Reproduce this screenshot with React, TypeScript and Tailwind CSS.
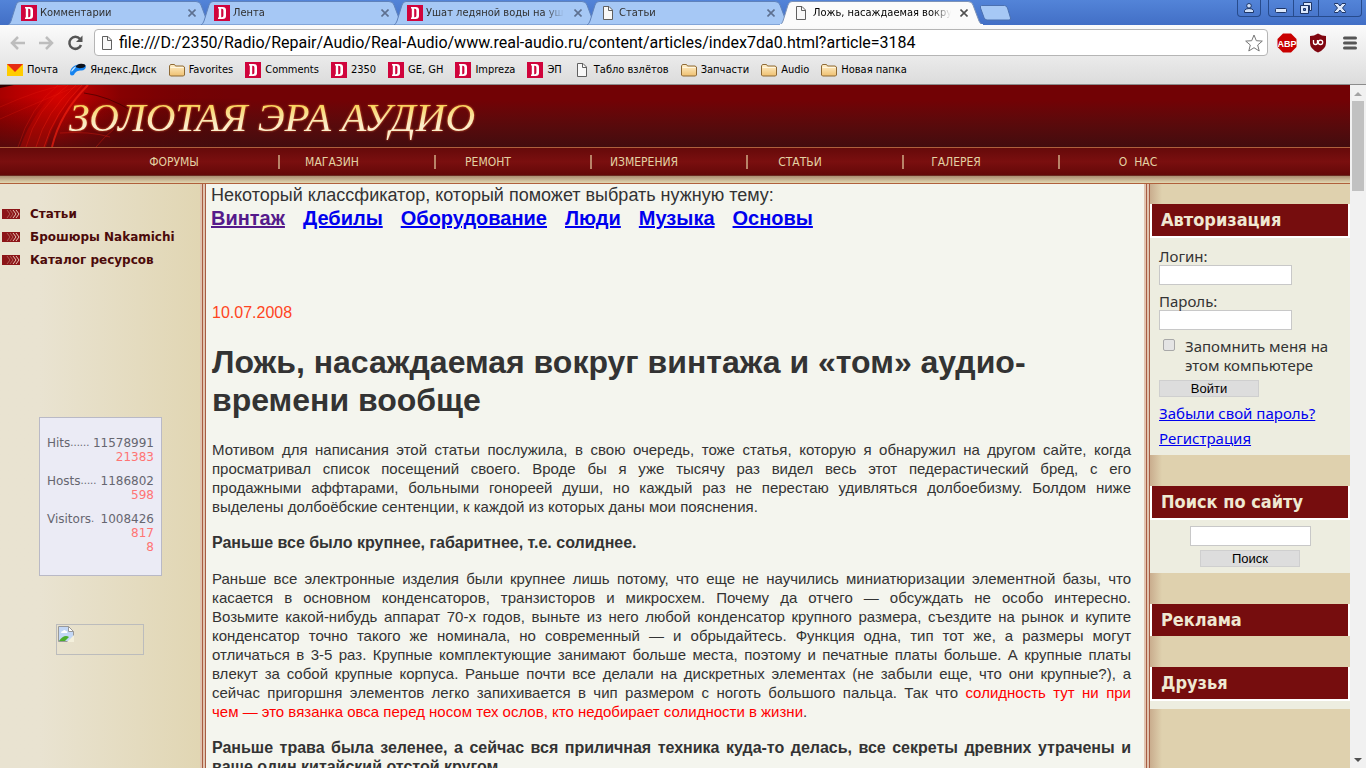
import { Fragment } from 'react';
import type { ReactNode } from 'react';

type IconName = 'd' | 'page' | 'folder' | 'mail' | 'disk';

const TABS: { icon: IconName; title: string; active?: boolean }[] = [
  { icon: 'd', title: 'Комментарии' },
  { icon: 'd', title: 'Лента' },
  { icon: 'd', title: 'Ушат ледяной воды на уш' },
  { icon: 'page', title: 'Статьи' },
  { icon: 'page', title: 'Ложь, насаждаемая вокруг', active: true },
];

const BOOKMARKS: { icon: IconName; label: string }[] = [
  { icon: 'mail', label: 'Почта' },
  { icon: 'disk', label: 'Яндекс.Диск' },
  { icon: 'folder', label: 'Favorites' },
  { icon: 'd', label: 'Comments' },
  { icon: 'd', label: '2350' },
  { icon: 'd', label: 'GE, GH' },
  { icon: 'd', label: 'Impreza' },
  { icon: 'd', label: 'ЭП' },
  { icon: 'page', label: 'Табло взлётов' },
  { icon: 'folder', label: 'Запчасти' },
  { icon: 'folder', label: 'Audio' },
  { icon: 'folder', label: 'Новая папка' },
];

const NAV = ['ФОРУМЫ', 'МАГАЗИН', 'РЕМОНТ', 'ИЗМЕРЕНИЯ', 'СТАТЬИ', 'ГАЛЕРЕЯ'];
const TOPICS = ['Винтаж', 'Дебилы', 'Оборудование', 'Люди', 'Музыка', 'Основы'];
const MENU = ['Статьи', 'Брошюры Nakamichi', 'Каталог ресурсов'];

const COUNTERS = [
  { name: 'Hits', dots: '......', total: '11578991', today: ['21383'] },
  { name: 'Hosts', dots: '.....', total: '1186802', today: ['598'] },
  { name: 'Visitors', dots: '.', total: '1008426', today: ['817', '8'] },
];

const INTRO = [
  'Мотивом для написания этой статьи послужила, в свою очередь, тоже статья, которую я обнаружил на другом сайте, когда',
  'просматривал список посещений своего. Вроде бы я уже тысячу раз видел весь этот педерастический бред, с его',
  'продажными аффтарами, больными гонореей души, но каждый раз не перестаю удивляться долбоебизму. Болдом ниже',
  'выделены долбоёбские сентенции, к каждой из которых даны мои пояснения.',
];

const SIZE: ReactNode[] = [
  'Раньше все электронные изделия были крупнее лишь потому, что еще не научились миниатюризации элементной базы, что',
  'касается в основном конденсаторов, транзисторов и микросхем. Почему да отчего — обсуждать не особо интересно.',
  'Возьмите какой-нибудь аппарат 70-х годов, выньте из него любой конденсатор крупного размера, съездите на рынок и купите',
  'конденсатор точно такого же номинала, но современный — и обрыдайтесь. Функция одна, тип тот же, а размеры могут',
  'отличаться в 3-5 раз. Крупные комплектующие занимают больше места, поэтому и печатные платы больше. А крупные платы',
  'влекут за собой крупные корпуса. Раньше почти все делали на дискретных элементах (не забыли еще, что они крупные?), а',
  <>
    сейчас пригоршня элементов легко запихивается в чип размером с ноготь большого пальца. Так что{' '}
    <span className="text-[#ff0000]">солидность тут ни при</span>
  </>,
  <>
    <span className="text-[#ff0000]">чем — это вязанка овса перед носом тех ослов, кто недобирает солидности в жизни</span>.
  </>,
];

function Icon({ name }: { name: IconName }) {
  if (name === 'd') {
    return (
      <span className="flex h-4 w-4 shrink-0 items-center justify-center bg-[#d0043c]">
        <svg viewBox="0 0 8 12" className="h-3 w-2" aria-hidden="true">
          <path d="M0 0h4.500Q8 0 8 3v6q0 3-3.500 3H0v-1.500h.8v-9H0zM3.200 1.800v8.400h.8q1.400 0 1.400-1.600V3.400q0-1.600-1.400-1.600z" fill="#fff" fillRule="evenodd" />
        </svg>
      </span>
    );
  }
  if (name === 'page') {
    return (
      <svg viewBox="0 0 16 16" className="h-4 w-4 shrink-0" aria-hidden="true">
        <path d="M3.500 1.500h5.500l3.500 3.500v9.500h-9z" fill="#f8f8f8" stroke="#606060" />
        <path d="M8.500 1.500v4h4" fill="none" stroke="#606060" />
      </svg>
    );
  }
  if (name === 'folder') {
    return (
      <svg viewBox="0 0 16 16" className="h-4 w-4 shrink-0" aria-hidden="true">
        <defs>
          <linearGradient id="folder" x1="0" y1="0" x2="0" y2="1">
            <stop offset="0" stopColor="#fff0cc" />
            <stop offset="1" stopColor="#efc070" />
          </linearGradient>
        </defs>
        <path d="M.5 13V4l1-1.500h4l1 1.500h7.500l1.500 1v8l-1 1h-13z" fill="url(#folder)" stroke="#8f6a35" />
        <path d="M1.500 5.500h13" stroke="#fff7e0" />
      </svg>
    );
  }
  if (name === 'mail') {
    return (
      <svg viewBox="0 0 16 16" className="h-4 w-4 shrink-0" aria-hidden="true">
        <path d="M0 2h16v12H0z" fill="#fc0" />
        <path d="M0 2h16L8 10z" fill="#e62c12" />
      </svg>
    );
  }
  return (
    <svg viewBox="0 0 16 16" className="h-4 w-4 shrink-0" aria-hidden="true">
      <path d="M0 11.500Q0 6 5 3.500T14.500 2.500Q17 4 15 7q-2 2-5 1.500Q6.500 8.500 5 11q-1 2.500-3 2.500-2 0-2-2z" fill="#1583f0" />
      <path d="M1 9.500Q2.500 5.500 6.500 4 5.500 6 3.500 8q-1 1.500-2.500 1.500z" fill="#c8e8ff" />
      <path d="M5.500 5Q7 2 11 1.800t4.500 1.700q-.5 2-4 2.500T5.500 5z" fill="#10141c" />
    </svg>
  );
}

function Tab({ icon, title, active }: { icon: IconName; title: string; active?: boolean }) {
  return (
    <div className={active ? 'relative z-10 -mr-[10px] h-6 w-[203px] shrink-0' : 'relative -mr-[10px] h-6 w-[203px] shrink-0'}>
      <svg viewBox="0 0 203 24" className="absolute inset-0 h-full w-full" aria-hidden="true">
        <path
          d="M0 24q2-1 3-4L8 4q1-3.500 4-3.500h176q4 0 5 3.500l6 16q1 3 4 4z"
          fill={active ? '#fbfbfb' : '#a6c8f5'}
          stroke={active ? '#7d93b8' : '#5f82bb'}
        />
        {active && <path d="M0 24h203" stroke="#fbfbfb" strokeWidth="2" />}
      </svg>
      <div className="relative flex h-full items-center pr-[15px] pl-[13px]">
        <Icon name={icon} />
        <span
          className={
            active
              ? 'ml-1 w-[138px] overflow-hidden whitespace-nowrap text-black [mask-image:linear-gradient(90deg,#000_86%,transparent)]'
              : 'ml-[3px] w-[138px] overflow-hidden whitespace-nowrap text-[#303030] [mask-image:linear-gradient(90deg,#000_86%,transparent)]'
          }
        >
          {title}
        </span>
        <button className="ml-auto" aria-label="Закрыть вкладку">
          <svg viewBox="0 0 8 8" className="h-2 w-2" aria-hidden="true">
            <path d="M.5.5l7 7m0-7l-7 7" stroke={active ? '#505050' : '#5d7090'} strokeWidth="1.600" />
          </svg>
        </button>
      </div>
    </div>
  );
}

function TabStrip() {
  return (
    <div className="flex h-[25px] items-end bg-gradient-to-b from-[#5384d8] to-[#426fc6] pl-2">
      {TABS.map((t) => (
        <Tab key={t.title} {...t} />
      ))}
      <button className="ml-[6px] self-center" aria-label="Новая вкладка">
        <svg viewBox="0 0 32 16" className="h-4 w-8" aria-hidden="true">
          <path d="M2.500.5h23q2 0 3 2.500l3 10q.5 2-1.500 2H8q-2 0-3-2.500L1.500 3Q1 .5 2.500.5z" fill="#a6c8f5" stroke="#4b70b0" />
        </svg>
      </button>
      <div className="ml-auto flex gap-[7px] self-start pr-1">
        <button className="flex h-[17px] w-6 items-center justify-center rounded-b border border-t-0 border-[#274b8c]" aria-label="Профиль">
          <svg viewBox="0 0 10 10" className="h-[10px] w-[10px]" aria-hidden="true">
            <circle cx="5" cy="2.800" r="2.300" fill="#cfe0fa" stroke="#1d3566" />
            <path d="M.5 9.500v-2q1-2 4.500-2t4.500 2v2z" fill="#cfe0fa" stroke="#1d3566" />
          </svg>
        </button>
        <div className="flex h-[17px] divide-x divide-[#274b8c] rounded-b border border-t-0 border-[#274b8c]">
          <button className="flex w-[25px] items-center justify-center pt-1" aria-label="Свернуть">
            <svg viewBox="0 0 12 5" className="h-[5px] w-3" aria-hidden="true">
              <rect x=".5" y=".5" width="11" height="4" rx="1" fill="#dce8fb" stroke="#1d3566" />
            </svg>
          </button>
          <button className="flex w-[25px] items-center justify-center" aria-label="Развернуть">
            <svg viewBox="0 0 12 12" className="h-3 w-3" aria-hidden="true">
              <path d="M3.500.5h8v8h-2v-5h-6z" fill="#dce8fb" stroke="#1d3566" />
              <path d="M.5 3.500h8v8h-8zM3.500 6.500v2h2v-2z" fill="#dce8fb" stroke="#1d3566" fillRule="evenodd" />
            </svg>
          </button>
          <button className="flex w-[42px] items-center justify-center" aria-label="Закрыть">
            <svg viewBox="0 0 12 10" className="h-[10px] w-3" aria-hidden="true">
              <path d="M.5.5h3.500l2 2.500 2-2.500h3.500v1L8.500 5l3 3.500v1H8L6 7 4 9.500H.5v-1l3-3.500-3-3.500z" fill="#dce8fb" stroke="#1d3566" />
            </svg>
          </button>
        </div>
      </div>
    </div>
  );
}

function Toolbar() {
  return (
    <div className="border-b border-[#8c8c8c] bg-gradient-to-b from-[#fbfbfb] to-[#dcdcdc]">
      <div className="flex h-[31px] items-center pt-1 pr-[9px] pl-[10px]">
        <button aria-label="Назад">
          <svg viewBox="0 0 16 14" className="h-[14px] w-4" aria-hidden="true">
            <path d="M15 7H2M8 1L2 7l6 6" fill="none" stroke="#bdbdbd" strokeWidth="2.500" />
          </svg>
        </button>
        <button className="ml-3" aria-label="Вперёд">
          <svg viewBox="0 0 16 14" className="h-[14px] w-4" aria-hidden="true">
            <path d="M1 7h13M8 1l6 6-6 6" fill="none" stroke="#bdbdbd" strokeWidth="2.500" />
          </svg>
        </button>
        <button className="ml-[13px]" aria-label="Обновить">
          <svg viewBox="0 0 16 16" className="h-4 w-4" aria-hidden="true">
            <path d="M13 4A6 6 0 1 0 14 10" fill="none" stroke="#555" strokeWidth="2.500" />
            <path d="M15.500.5V7H9z" fill="#555" />
          </svg>
        </button>
        <div className="ml-[11px] flex h-[27px] flex-1 items-center rounded-sm border border-[#b5b5b5] bg-white pr-1 pl-1">
          <Icon name="page" />
          <input
            aria-label="Адрес"
            className="ml-1 min-w-0 flex-1 bg-transparent font-[Roboto,sans-serif] text-[16px] text-black outline-none"
            defaultValue="file:///D:/2350/Radio/Repair/Audio/Real-Audio/www.real-audio.ru/content/articles/index7da0.html?article=3184"
          />
          <button aria-label="Добавить в закладки">
            <svg viewBox="0 0 18 18" className="h-[18px] w-[18px]" aria-hidden="true">
              <path d="M9 1l2.300 5.700 6 .4-4.600 3.900 1.500 6L9 13.700 3.800 17l1.500-6L.7 7.100l6-.4z" fill="#fff" stroke="#777" strokeLinejoin="round" />
            </svg>
          </button>
        </div>
        <button className="ml-[9px]" aria-label="Adblock Plus">
          <svg viewBox="0 0 20 20" className="h-5 w-5" aria-hidden="true">
            <path d="M6 .5h8L19.500 6v8L14 19.500H6L.5 14V6z" fill="#c90000" />
            <text x="10" y="13.500" textAnchor="middle" fontSize="9" fontWeight="700" fill="#fff" fontFamily="Liberation Sans, sans-serif">ABP</text>
          </svg>
        </button>
        <button className="ml-3" aria-label="uBlock Origin">
          <svg viewBox="0 0 18 20" className="h-5 w-[18px]" aria-hidden="true">
            <path d="M9 .5q4 2.500 8 2.500v7q0 6-8 9.500Q1 16 1 10V3q4 0 8-2.500z" fill="#800610" />
            <path d="M4.500 7v2.500a2 2 0 0 0 4 0V7" fill="none" stroke="#fff" strokeWidth="1.300" />
            <circle cx="11.500" cy="9.300" r="2.200" fill="none" stroke="#fff" strokeWidth="1.300" />
          </svg>
        </button>
        <button className="ml-4" aria-label="Меню">
          <svg viewBox="0 0 14 14" className="h-[14px] w-[14px]" aria-hidden="true">
            <path d="M1.500 2h11M1.500 7h11M1.500 12h11" stroke="#555" strokeWidth="3" strokeLinecap="round" />
          </svg>
        </button>
      </div>
      <div className="flex h-7 items-center gap-3 pl-[7px]">
        {BOOKMARKS.map((b) => (
          <a key={b.label} href="#" className="flex items-center gap-1 text-black">
            <Icon name={b.icon} />
            {b.label}
          </a>
        ))}
      </div>
    </div>
  );
}

function SiteHeader() {
  return (
    <header>
      <div className="relative h-[62px] overflow-hidden bg-gradient-to-b from-[#720205] from-25% to-[#430c0e]">
        <svg viewBox="0 0 240 62" className="absolute top-0 left-0 h-[62px] w-60" aria-hidden="true">
          <defs>
            <linearGradient id="glow" x1="0" y1="0" x2="1" y2="0">
              <stop offset="0" stopColor="#a80000" />
              <stop offset=".25" stopColor="#e00000" stopOpacity=".9" />
              <stop offset=".5" stopColor="#900000" stopOpacity=".7" />
              <stop offset="1" stopColor="#700000" stopOpacity="0" />
            </linearGradient>
            <linearGradient id="fade" x1="0" y1="0" x2="0" y2="1">
              <stop offset=".2" stopColor="#400000" stopOpacity="0" />
              <stop offset="1" stopColor="#430c0e" stopOpacity=".8" />
            </linearGradient>
          </defs>
          <path d="M0 0h240v62H0z" fill="url(#glow)" />
          <path d="M0 0h240v62H0z" fill="url(#fade)" />
          <path d="M64 0h20Q56 26 46 62H20Q34 24 64 0z" fill="#d80800" opacity=".35" />
          <g fill="none" stroke="#f02010">
            <path d="M88 0Q60 28 52 62" strokeWidth="2" opacity=".7" />
            <path d="M82 0Q54 28 44 62" opacity=".5" />
            <path d="M76 0Q46 26 36 62" opacity=".4" />
            <path d="M68 0Q36 24 26 62" opacity=".35" />
            <path d="M58 0Q30 22 18 62" opacity=".3" />
            <path d="M0 22Q40 4 66 0M0 34Q50 12 80 0" opacity=".25" />
            <path d="M60 48Q90 46 110 52M96 62Q104 52 114 44" opacity=".35" />
          </g>
          <path d="M84 8q24 3 48 18" fill="none" stroke="#300000" opacity=".6" />
          <path d="M0 0h14L0 3z" fill="#300000" />
        </svg>
        <div className="relative w-fit bg-gradient-to-b from-[#f8d45c] from-35% to-[#fbeecb] to-70% bg-clip-text pt-[6px] pl-[69px] font-['Liberation_Serif',serif] text-[41px] leading-[52px] text-transparent italic drop-shadow-[0_0_1px_#e06030]">
          ЗОЛОТАЯ ЭРА АУДИО
        </div>
      </div>
      <nav className="flex h-[29px] items-center border-t border-b border-t-[#b0603c] border-b-[#6a2a20] bg-gradient-to-b from-[#660a0a] via-[#7a0f0f] to-[#640808] pl-[122px] font-['DejaVu_Sans_Condensed','DejaVu_Sans',sans-serif] text-xs text-[#e3d2a4]">
        {NAV.map((n, i) => (
          <Fragment key={n}>
            {i > 0 && <span className="h-[14px] w-[2px] bg-[#b98468]" />}
            <a href="#" className={i === 0 ? 'mr-[52px] w-[104px] text-center' : 'mr-[50px] w-[104px] text-center'}>
              {n}
            </a>
          </Fragment>
        ))}
        <span className="h-[14px] w-[2px] bg-[#b98468]" />
        <a href="#" className="w-[156px] text-center">
          О&nbsp; НАС
        </a>
      </nav>
      <div className="h-2 border-b border-[#b0603c] bg-gradient-to-b from-[#ab8e72] to-[#e2d8b2]" />
    </header>
  );
}

function Rail() {
  return (
    <div className="flex w-[6px] shrink-0 bg-[#e0c4b0] pl-[2px]">
      <div className="flex-1 border-x border-[#a85c42]" />
    </div>
  );
}

function LeftColumn() {
  return (
    <aside className="w-[200px] shrink-0 bg-gradient-to-r from-[#e9e3d1] from-20% to-[#e1d6b3]">
      <ul className="pt-[18px] pl-[2px] font-['DejaVu_Sans',sans-serif] text-xs font-bold text-[#4c0a0a]">
        {MENU.map((m) => (
          <li key={m} className="flex h-[23px] items-center gap-[10px] whitespace-nowrap">
            <svg viewBox="0 0 18 10" className="h-[10px] w-[18px]" aria-hidden="true">
              <path d="M0 0h18v10H0z" fill="#8c1518" />
              <path d="M5 1l3 4-3 4M8 1l3 4-3 4" fill="none" stroke="#b87068" strokeWidth=".8" />
              <path d="M11 1l3 4-3 4M14 1l3 4-3 4" fill="none" stroke="#f0d8c8" strokeWidth=".9" />
            </svg>
            <a href="#">{m}</a>
          </li>
        ))}
      </ul>
      <div className="mt-[146px] ml-[39px] h-[159px] w-[123px] border border-[#b9b9c6] bg-[#ebebf5] px-[7px] pt-[18px] font-['DejaVu_Sans',sans-serif] text-xs leading-[14px]">
        {COUNTERS.map((c) => (
          <div key={c.name} className="mb-[10px] text-right text-[#ff7474]">
            <div className="flex justify-between text-[#666670]">
              <span>{c.name}</span>
              <span className="flex-1 text-left text-[10px]">{c.dots}</span>
              <span>{c.total}</span>
            </div>
            {c.today.map((t) => (
              <div key={t}>{t}</div>
            ))}
          </div>
        ))}
      </div>
      <div className="mt-12 ml-14 h-[31px] w-[88px] border border-[#bcbcbc] p-[1px]">
        <svg viewBox="0 0 16 16" className="h-4 w-4" aria-hidden="true">
          <path d="M.5.5h10l5 5v10H.5z" fill="#c3d7f5" stroke="#999" />
          <path d="M10.500.5v5h5z" fill="#fff" stroke="#999" />
          <path d="M3 7q0-2 2-2 1-2 3 0 2 0 1 2z" fill="#fff" />
          <path d="M1 15q5-7 10-4l-4 4z" fill="#4cae2c" />
          <path d="M9 16l7-7v7z" fill="#f4f0dc" />
        </svg>
      </div>
    </aside>
  );
}

// every line but the last is spread over the full measure
function Lines({ lines }: { lines: ReactNode[] }) {
  return (
    <p className="text-[15px]">
      {lines.map((line, i) => (
        <span key={i} className={i < lines.length - 1 ? 'block [text-align-last:justify]' : 'block'}>
          {line}
        </span>
      ))}
    </p>
  );
}

function Article() {
  return (
    <main className="min-w-0 flex-1 bg-[#f4f5ee] font-['Liberation_Sans',Arial,sans-serif] text-[#333]">
      <div className="pl-[5px]">
        <p className="text-lg leading-[22px]">Некоторый классфикатор, который поможет выбрать нужную тему:</p>
        <div className="flex gap-[18px] text-[20px] leading-6 font-bold">
          {TOPICS.map((t, i) => (
            <a key={t} href="#" className={i === 0 ? 'text-[#551a8b] underline' : 'text-[#0000ee] underline'}>
              {t}
            </a>
          ))}
        </div>
      </div>
      <article className="mt-[73px] pr-[13px] pl-[6px] text-base leading-[19px]">
        <div className="text-[#ff4422]">10.07.2008</div>
        <h1 className="my-[21px] text-[32px] leading-[38px] font-bold">
          Ложь, насаждаемая вокруг винтажа и «том» аудио-времени вообще
        </h1>
        <div className="space-y-[17px] text-justify">
          <Lines lines={INTRO} />
          <p className="font-bold">Раньше все было крупнее, габаритнее, т.е. солиднее.</p>
          <Lines lines={SIZE} />
          <p className="font-bold">
            Раньше трава была зеленее, а сейчас вся приличная техника куда-то делась, все секреты древних утрачены и
            ваще один китайский отстой кругом.
          </p>
        </div>
      </article>
    </main>
  );
}

function Block({ title, children }: { title: string; children?: ReactNode }) {
  return (
    <section className="mb-[31px] bg-[#edede0]">
      <h2 className="h-8 border-x-2 border-white bg-[#760d0e] pl-[9px] font-['DejaVu_Sans_Condensed','DejaVu_Sans',sans-serif] text-lg leading-8 font-bold text-[#efe8d2]">
        {title}
      </h2>
      {children}
    </section>
  );
}

function RightColumn() {
  return (
    <aside className="w-[200px] shrink-0 bg-[#dfd1ae] bg-[linear-gradient(90deg,#c9ad8e,transparent_6%)] pt-5 font-['Noto_Sans',sans-serif] text-[15px] leading-[19px] text-[#333]">
      <Block title="Авторизация">
        <form className="border-t-2 border-white px-[9px] pt-[9px] pb-[7px]">
          <label htmlFor="login" className="block h-[18px]">
            Логин:
          </label>
          <input id="login" className="block h-5 w-[133px] border border-[#c8c8c8] bg-white" />
          <label htmlFor="password" className="mt-[7px] block h-[18px]">
            Пароль:
          </label>
          <input id="password" type="password" className="block h-5 w-[133px] border border-[#c8c8c8] bg-white" />
          <label className="mt-[7px] flex items-start">
            <input
              type="checkbox"
              className="mt-[2px] mr-[10px] ml-1 h-3 w-3 shrink-0 appearance-none rounded-[2px] border border-[#a8a8a8] bg-[#e4e4e4]"
            />
            Запомнить меня на этом компьютере
          </label>
          <button
            type="button"
            className="mt-[5px] block h-[17px] w-[100px] border border-[#cfcfcf] bg-[#dddddd] font-['Liberation_Sans',sans-serif] text-[13px] leading-[15px] text-black"
          >
            Войти
          </button>
          <a href="#" className="mt-[7px] block text-[#0000ee] underline">
            Забыли свой пароль?
          </a>
          <a href="#" className="mt-[6px] block text-[#0000ee] underline">
            Регистрация
          </a>
        </form>
      </Block>
      <Block title="Поиск по сайту">
        <form className="flex flex-col items-center gap-1 border-t-2 border-white pt-[6px] pb-[6px]">
          <input aria-label="Поиск по сайту" className="h-5 w-[121px] border border-[#c8c8c8] bg-white" />
          <button
            type="button"
            className="h-[17px] w-[100px] border border-[#cfcfcf] bg-[#dddddd] font-['Liberation_Sans',sans-serif] text-[13px] leading-[15px] text-black"
          >
            Поиск
          </button>
        </form>
      </Block>
      <Block title="Реклама" />
      <Block title="Друзья">
        <div className="h-[10px] border-t-2 border-white" />
      </Block>
    </aside>
  );
}

function Scrollbar() {
  return (
    <div className="flex w-4 shrink-0 flex-col items-center bg-[#f1f1f1]">
      <svg viewBox="0 0 16 16" className="h-4 w-4 shrink-0" aria-hidden="true">
        <path d="M4 11l4-4 4 4z" fill="#a3a3a3" />
      </svg>
      <div className="h-[90px] w-3 bg-[#c1c1c1]" />
      <svg viewBox="0 0 16 16" className="mt-auto h-4 w-4 shrink-0" aria-hidden="true">
        <path d="M4 6l4 4 4-4z" fill="#505050" />
      </svg>
    </div>
  );
}

export default function App() {
  return (
    <div className="flex h-screen flex-col overflow-hidden font-['DejaVu_Sans_Condensed','DejaVu_Sans',sans-serif] text-[11px]">
      <TabStrip />
      <Toolbar />
      <div className="flex min-h-0 flex-1">
        <div className="flex min-w-0 flex-1 flex-col overflow-hidden">
          <SiteHeader />
          <div className="flex min-h-0 flex-1">
            <LeftColumn />
            <Rail />
            <Article />
            <Rail />
            <RightColumn />
          </div>
        </div>
        <Scrollbar />
      </div>
    </div>
  );
}
